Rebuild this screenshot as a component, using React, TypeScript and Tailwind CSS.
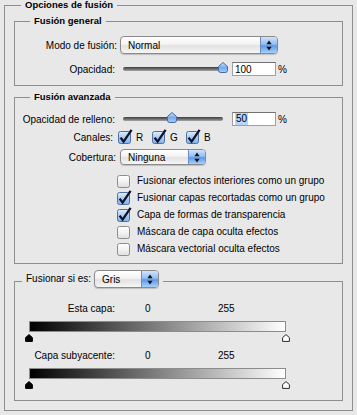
import React from "react";

const FS = "m-0 min-w-0 border border-[#8e8e8e]";
const LEG = "font-bold text-[9.5px] leading-[12px]";

function Arrows() {
  return (
    <svg width="6" height="11" viewBox="0 0 6 11">
      <path d="M3 0.5 L5.6 4.2 H0.4 Z" fill="#111" />
      <path d="M3 10.5 L5.6 6.8 H0.4 Z" fill="#111" />
    </svg>
  );
}

function Select({ label, cls }: { label: string; cls: string }) {
  return (
    <div
      className={`flex ${cls} overflow-hidden rounded-[4px] border border-[#8a8a8a] bg-[linear-gradient(to_bottom,#ffffff_0%,#f3f3f3_45%,#e2e2e2_55%,#f6f6f6_100%)] shadow-[0_1px_1px_rgba(0,0,0,0.18)]`}
    >
      <div className="flex flex-1 items-center pl-[7px]">{label}</div>
      <div className="flex w-[17px] items-center justify-center border-l border-[#6d8dc2] bg-[linear-gradient(to_bottom,#cfe3fc_0%,#93bff4_45%,#5b99e8_55%,#a9d0fa_100%)]">
        <Arrows />
      </div>
    </div>
  );
}

function Box({ checked, id }: { checked?: boolean; id: string }) {
  return (
    <svg width="15" height="16" viewBox="0 0 15 16" className="shrink-0">
      <defs>
        <linearGradient id={id} x1="0" y1="0" x2="0" y2="1">
          {checked ? (
            <>
              <stop offset="0" stopColor="#e2eefc" />
              <stop offset="0.5" stopColor="#a9cbf3" />
              <stop offset="1" stopColor="#7fb3ee" />
            </>
          ) : (
            <>
              <stop offset="0" stopColor="#ffffff" />
              <stop offset="0.5" stopColor="#f2f2f2" />
              <stop offset="1" stopColor="#dedede" />
            </>
          )}
        </linearGradient>
      </defs>
      <rect
        x="0.5"
        y="2.5"
        width="12"
        height="12"
        rx="2"
        fill={`url(#${id})`}
        stroke={checked ? "#50709f" : "#8c8c8c"}
      />
      {checked && (
        <path
          d="M2.6 8.6 L5.6 12.6 L13.6 0.8"
          fill="none"
          stroke="#10112a"
          strokeWidth="2.3"
          strokeLinejoin="miter"
        />
      )}
    </svg>
  );
}

function Thumb() {
  return (
    <svg width="10" height="11" viewBox="0 0 10 11">
      <defs>
        <linearGradient id="thumbg" x1="0" y1="0" x2="0" y2="1">
          <stop offset="0" stopColor="#d4e6fc" />
          <stop offset="0.5" stopColor="#74aaf0" />
          <stop offset="1" stopColor="#a8cef9" />
        </linearGradient>
      </defs>
      <path
        d="M5 0.5 L9.5 4.5 V8.3 Q9.5 10.5 7.3 10.5 H2.7 Q0.5 10.5 0.5 8.3 V4.5 Z"
        fill="url(#thumbg)"
        stroke="#46689e"
      />
    </svg>
  );
}

function Slider({ pos }: { pos: number }) {
  return (
    <div className="relative ml-[8px] h-[16px] w-[105px]">
      <div className="absolute left-0 top-[6px] h-[4px] w-[100px] rounded-full bg-[linear-gradient(to_bottom,#3f3f3f,#6a6a6a_50%,#a8a8a8)]" />
      <div className="absolute top-[1px]" style={{ left: pos }}>
        <Thumb />
      </div>
    </div>
  );
}

function Handle({ white }: { white?: boolean }) {
  return (
    <svg width="8" height="8" viewBox="0 0 8 8">
      <path
        d="M4 0.6 L7.4 3.6 V7.4 H0.6 V3.6 Z"
        fill={white ? "#ffffff" : "#000000"}
        stroke={white ? "#2a2a2a" : "#000000"}
        strokeWidth="1"
      />
    </svg>
  );
}

function Gradient() {
  return (
    <>
      <div className="ml-[14px] mt-[6px] h-[11px] w-[257px] border border-[#8c8c8c] bg-[linear-gradient(to_right,#000000,#ffffff)]" />
      <div className="relative ml-[14px] h-[9px] w-[257px]">
        <div className="absolute left-[-4px] top-[2px] flex">
          <Handle />
        </div>
        <div className="absolute right-[-4px] top-[2px] flex">
          <Handle white />
        </div>
      </div>
    </>
  );
}

const opts: [string, boolean][] = [
  ["Fusionar efectos interiores como un grupo", false],
  ["Fusionar capas recortadas como un grupo", true],
  ["Capa de formas de transparencia", true],
  ["Máscara de capa oculta efectos", false],
  ["Máscara vectorial oculta efectos", false],
];

export default function App() {
  return (
    <div className="h-[415px] w-[357px] overflow-hidden bg-[#e8e8e8] pl-[4px] font-['Liberation_Sans',Arial,sans-serif] text-[10px] text-black">
      <fieldset className={`${FS} w-[349px] px-[9px] pb-[9px]`}>
        <legend className="ml-[7px] px-[4px] text-[9.5px] font-bold leading-[10px]">
          Opciones de fusión
        </legend>

        <fieldset className={`${FS} mt-[5px] pb-[8px]`}>
          <legend className={`${LEG} ml-[15px] px-[4px]`}>Fusión general</legend>
          <div className="mt-[9px] flex h-[18px] items-center">
            <div className="w-[102px] text-right">Modo de fusión:</div>
            <Select label="Normal" cls="ml-[3px] h-[18px] w-[158px]" />
          </div>
          <div className="mt-[7px] flex h-[16px] items-center">
            <div className="w-[100px] text-right">Opacidad:</div>
            <Slider pos={95} />
            <div className="ml-[4px] flex h-[14px] w-[44px] items-center border border-[#a0a0a0] border-t-[#707070] bg-white pl-[2px]">
              100
            </div>
            <div className="ml-[2px]">%</div>
          </div>
        </fieldset>

        <fieldset className={`${FS} mt-[5px] pb-[6px]`}>
          <legend className={`${LEG} ml-[15px] px-[4px]`}>Fusión avanzada</legend>
          <div className="mt-[8px] flex h-[16px] items-center">
            <div className="w-[100px] text-right">Opacidad de relleno:</div>
            <Slider pos={44} />
            <div className="ml-[4px] flex h-[14px] w-[44px] items-center border border-[#a0a0a0] border-t-[#707070] bg-white pl-[2px]">
              <span className="bg-[#b5d5ff] px-[1px] leading-[12px]">50</span>
            </div>
            <div className="ml-[2px]">%</div>
          </div>
          <div className="mt-[2px] flex h-[16px] items-center">
            <div className="w-[98px] text-right">Canales:</div>
            <div className="ml-[5px] flex">
              {["R", "G", "B"].map((c) => (
                <div key={c} className="flex w-[34px] items-center">
                  <Box checked id={`ch${c}`} />
                  <span className="ml-[3px]">{c}</span>
                </div>
              ))}
            </div>
          </div>
          <div className="mt-[4px] flex h-[16px] items-center">
            <div className="w-[101px] text-right">Cobertura:</div>
            <Select label="Ninguna" cls="ml-[4px] h-[16px] w-[86px]" />
          </div>
          <div className="mt-[7px] flex flex-col">
            {opts.map(([t, c], i) => (
              <div key={t} className="flex h-[17px] items-center pl-[102px]">
                <Box checked={c} id={`op${i}`} />
                <span className="ml-[5px]">{t}</span>
              </div>
            ))}
          </div>
        </fieldset>

        <fieldset className={`${FS} mt-[6px] pb-[12px]`}>
          <legend className="ml-[7px] px-[4px]">
            <div className="flex h-[23px] items-start">
              <span className="leading-[18px]">Fusionar si es:</span>
              <Select label="Gris" cls="ml-[3px] h-[18px] w-[65px]" />
            </div>
          </legend>
          <div className="mt-[8px] flex h-[14px] items-center">
            <div className="w-[100px] text-right">Esta capa:</div>
            <div className="ml-[30px] w-[73px]">0</div>
            <div>255</div>
          </div>
          <Gradient />
          <div className="mt-[7px] flex h-[14px] items-center">
            <div className="w-[100px] text-right">Capa subyacente:</div>
            <div className="ml-[30px] w-[73px]">0</div>
            <div>255</div>
          </div>
          <Gradient />
        </fieldset>
      </fieldset>
    </div>
  );
}
